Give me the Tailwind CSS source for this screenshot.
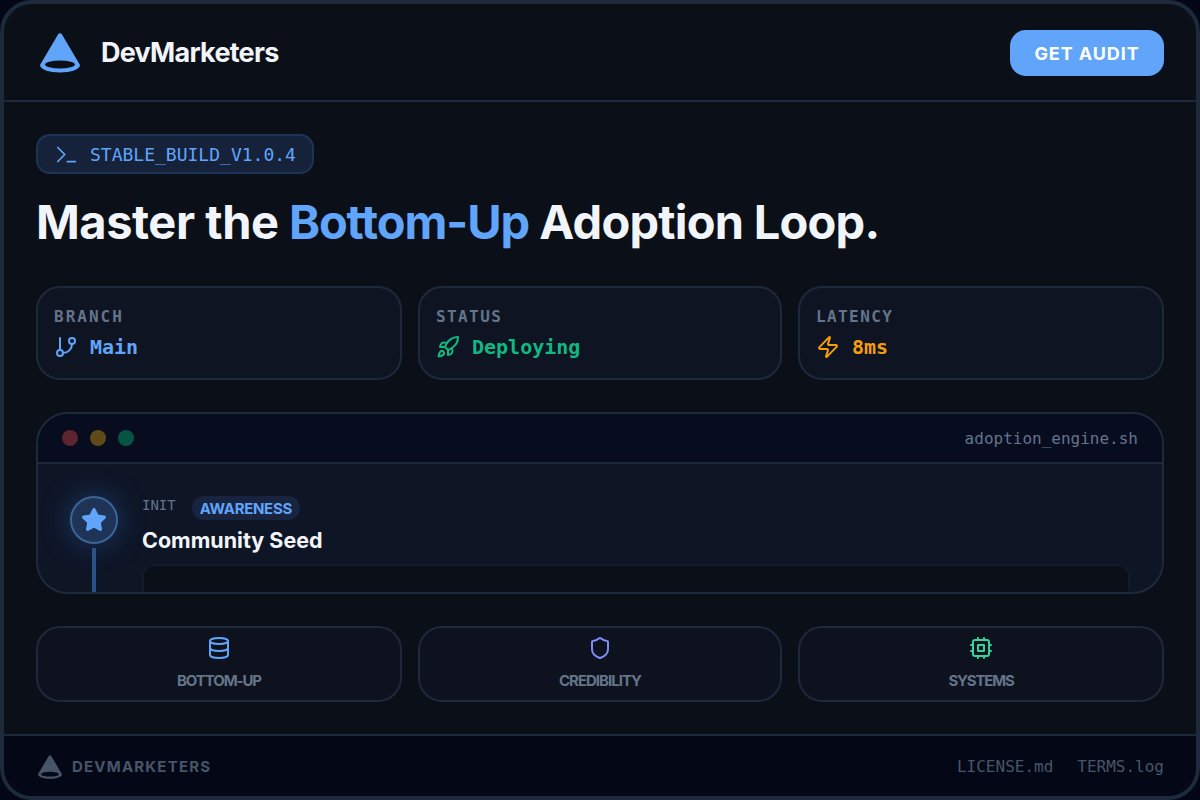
<!DOCTYPE html>
<html lang="en">
<head>
<meta charset="UTF-8" />
<title>DevMarketers</title>
<script src="https://cdn.jsdelivr.net/npm/@tailwindcss/browser@4"></script>
</head>
<body class="bg-[#020617] font-['Inter',sans-serif]">

<div class="w-[1200px] h-[800px] overflow-hidden rounded-[32px] border-4 border-[#1e293b] bg-[#0b0f18] flex flex-col">

  <!-- HEADER -->
  <header class="h-[98px] shrink-0 border-b-2 border-[#1e293b] px-8 flex items-center justify-between">
    <div class="flex items-center gap-[21px]">
      <svg width="40" height="40" viewBox="0 0 40 40" class="ml-1 mt-[1px]">
        <path d="M18 1.500c1-1.600 3-1.600 4 0L40 32c0 4.500-9 7.500-20 7.500S0 36.500 0 32z" fill="#60a5fa"/>
        <ellipse cx="20" cy="31.500" rx="15" ry="4" fill="#0b0f18"/>
      </svg>
      <span class="mt-[2px] text-[27px] font-bold tracking-[-0.75px] text-[#f1f5f9]">DevMarketers</span>
    </div>
    <button class="mt-[2px] h-[46px] w-[154px] rounded-2xl bg-[#60a5fa] text-white text-[18px] font-bold tracking-[0.9px]">GET AUDIT</button>
  </header>

  <!-- CONTENIDO -->
  <main class="flex-1 px-8 pt-8">
    <div class="inline-flex h-10 items-center gap-[13px] rounded-[14px] border-2 border-[#1e3a5f]/80 bg-[#16213a] pl-[18px] pr-[16px] font-['DejaVu_Sans_Mono',monospace] text-[18px] text-[#60a5fa]">
      <svg width="21" height="21" viewBox="0 0 24 24" fill="none" stroke="#60a5fa" stroke-width="2" stroke-linecap="round" stroke-linejoin="round"><path d="m2 4 8 8-8 8"/><path d="M13 20h9"/></svg>
      <span>STABLE_BUILD_V1.0.4</span>
    </div>

    <h1 class="mt-[18px] h-[60px] text-[47px] leading-[60px] font-bold tracking-[-0.77px] text-[#f1f5f9]"><span class="tracking-[-0.45px]">Master the</span> <span class="tracking-[-1.1px] text-[#60a5fa]">Bottom-Up</span> Adoption Loop.</h1>

    <!-- STATS -->
    <div class="mt-[34px] grid grid-cols-[366px_364px_366px] gap-4">
      <div class="h-[94px] rounded-[24px] border-2 border-[#1e293b] bg-[#0e1422] px-4 pt-[17px] font-['DejaVu_Sans_Mono',monospace]">
        <p class="text-[16px] leading-6 font-bold tracking-[2px] text-[#64748b]">BRANCH</p>
        <div class="mt-1 flex items-center gap-3 text-[20px] leading-7 font-bold text-[#60a5fa]">
          <svg width="24" height="24" viewBox="0 0 24 24" fill="none" stroke="#60a5fa" stroke-width="2" stroke-linecap="round" stroke-linejoin="round"><line x1="6" y1="3" x2="6" y2="15"/><circle cx="18" cy="6" r="3"/><circle cx="6" cy="18" r="3"/><path d="M18 9a9 9 0 0 1-9 9"/></svg>
          <span>Main</span>
        </div>
      </div>
      <div class="h-[94px] rounded-[24px] border-2 border-[#1e293b] bg-[#0e1422] px-4 pt-[17px] font-['DejaVu_Sans_Mono',monospace]">
        <p class="text-[16px] leading-6 font-bold tracking-[1.4px] text-[#64748b]">STATUS</p>
        <div class="mt-1 flex items-center gap-3 text-[20px] leading-7 font-bold text-[#10b981]">
          <svg width="24" height="24" viewBox="0 0 24 24" fill="none" stroke="#10b981" stroke-width="2" stroke-linecap="round" stroke-linejoin="round"><path d="M4.500 16.500c-1.500 1.260-2 5-2 5s3.740-.5 5-2c.71-.84.7-2.130-.09-2.910a2.180 2.180 0 0 0-2.910-.09z"/><path d="m12 15-3-3a22 22 0 0 1 2-3.950A12.880 12.880 0 0 1 22 2c0 2.720-.78 7.500-6 11a22.350 22.350 0 0 1-4 2z"/><path d="M9 12H4s.55-3.030 2-4c1.620-1.080 5 0 5 0"/><path d="M12 15v5s3.030-.55 4-2c1.080-1.620 0-5 0-5"/></svg>
          <span>Deploying</span>
        </div>
      </div>
      <div class="h-[94px] rounded-[24px] border-2 border-[#1e293b] bg-[#0e1422] px-4 pt-[17px] font-['DejaVu_Sans_Mono',monospace]">
        <p class="text-[16px] leading-6 font-bold tracking-[1.4px] text-[#64748b]">LATENCY</p>
        <div class="mt-1 flex items-center gap-3 text-[20px] leading-7 font-bold text-[#f59e0b]">
          <svg width="24" height="24" viewBox="0 0 24 24" fill="none" stroke="#f59e0b" stroke-width="2" stroke-linecap="round" stroke-linejoin="round"><path d="M4 14a1 1 0 0 1-.78-1.630l9.900-10.200a.5.5 0 0 1 .86.460l-1.920 6.020A1 1 0 0 0 13 10h7a1 1 0 0 1 .78 1.630l-9.900 10.200a.5.5 0 0 1-.86-.46l1.920-6.020A1 1 0 0 0 11 14z"/></svg>
          <span>8ms</span>
        </div>
      </div>
    </div>

    <!-- TERMINAL -->
    <div class="mt-8 h-[182px] overflow-hidden rounded-[32px] border-2 border-[#1e293b] bg-[#0e1525]">
      <div class="h-[50px] border-b-2 border-[#1e293b] bg-[#070c1e] pl-6 pr-6 flex items-center justify-between">
        <div class="flex gap-3">
          <span class="h-4 w-4 rounded-full bg-[#5e2430]"></span>
          <span class="h-4 w-4 rounded-full bg-[#5f4a1a]"></span>
          <span class="h-4 w-4 rounded-full bg-[#075444]"></span>
        </div>
        <span class="mt-[2px] font-['DejaVu_Sans_Mono',monospace] text-[16px] text-[#64748b]">adoption_engine.sh</span>
      </div>
      <div class="flex gap-6 pl-8 pr-[32px] pt-8">
        <div class="flex w-12 shrink-0 flex-col items-center">
          <div class="h-12 w-12 rounded-full border-2 border-[#3a6597] bg-[#1e3355] shadow-[0_0_30px_rgba(59,130,246,0.35)] flex items-center justify-center">
            <svg width="26" height="26" viewBox="0 0 24 24" fill="#60a5fa" stroke="#60a5fa" stroke-width="2" stroke-linecap="round" stroke-linejoin="round"><path d="M11.525 2.295a.53.53 0 0 1 .95 0l2.310 4.679a2.120 2.120 0 0 0 1.595 1.160l5.166.756a.53.53 0 0 1 .294.904l-3.736 3.638a2.120 2.120 0 0 0-.611 1.878l.882 5.140a.53.53 0 0 1-.771.560l-4.618-2.428a2.120 2.120 0 0 0-1.973 0L6.396 21.010a.53.53 0 0 1-.77-.56l.881-5.139a2.120 2.120 0 0 0-.611-1.879L2.160 9.795a.53.53 0 0 1 .294-.906l5.165-.755a2.120 2.120 0 0 0 1.597-1.160z"/></svg>
          </div>
          <div class="mt-1 h-12 w-1 bg-[#2b5288]"></div>
        </div>
        <div class="flex-1">
          <div class="flex items-start gap-4">
            <span class="font-['DejaVu_Sans_Mono',monospace] text-[14px] leading-[18px] text-[#64748b]">INIT</span>
            <span class="h-6 rounded-full bg-[#18243f] px-2 text-[15px] leading-[25px] font-bold tracking-[-0.3px] text-[#60a5fa]">AWARENESS</span>
          </div>
          <h2 class="mt-1 text-[21.500px] leading-8 font-bold text-[#f1f5f9]">Community Seed</h2>
          <div class="mt-2 h-20 rounded-xl border-2 border-[#111a2c] bg-[#0b0f18]"></div>
        </div>
      </div>
    </div>

    <!-- FEATURES -->
    <div class="mt-8 grid grid-cols-[366px_364px_366px] gap-4">
      <div class="h-[76px] rounded-[24px] border-2 border-[#1e293b] bg-[#0d121e] pt-2 flex flex-col items-center gap-2">
        <svg width="24" height="24" viewBox="0 0 24 24" fill="none" stroke="#60a5fa" stroke-width="2" stroke-linecap="round" stroke-linejoin="round"><ellipse cx="12" cy="5" rx="9" ry="3"/><path d="M3 5V19A9 3 0 0 0 21 19V5"/><path d="M3 12A9 3 0 0 0 21 12"/></svg>
        <span class="text-[15px] leading-[26px] font-bold tracking-[-1.1px] text-[#64748b]">BOTTOM-UP</span>
      </div>
      <div class="h-[76px] rounded-[24px] border-2 border-[#1e293b] bg-[#0d121e] pt-2 flex flex-col items-center gap-2">
        <svg width="24" height="24" viewBox="0 0 24 24" fill="none" stroke="#818cf8" stroke-width="2" stroke-linecap="round" stroke-linejoin="round"><path d="M20 13c0 5-3.500 7.500-7.660 8.950a1 1 0 0 1-.67-.01C7.500 20.500 4 18 4 13V6a1 1 0 0 1 1-1c2 0 4.500-1.200 6.240-2.720a1.170 1.170 0 0 1 1.520 0C14.510 3.810 17 5 19 5a1 1 0 0 1 1 1z"/></svg>
        <span class="text-[15px] leading-[26px] font-bold tracking-[-1px] text-[#64748b]">CREDIBILITY</span>
      </div>
      <div class="h-[76px] rounded-[24px] border-2 border-[#1e293b] bg-[#0d121e] pt-2 flex flex-col items-center gap-2">
        <svg width="24" height="24" viewBox="0 0 24 24" fill="none" stroke="#34d399" stroke-width="2" stroke-linecap="round" stroke-linejoin="round"><rect x="4" y="4" width="16" height="16" rx="2"/><rect x="9" y="9" width="6" height="6"/><path d="M15 2v2M15 20v2M2 15h2M2 9h2M20 15h2M20 9h2M9 2v2M9 20v2"/></svg>
        <span class="text-[15px] leading-[26px] font-bold tracking-[-1.2px] text-[#64748b]">SYSTEMS</span>
      </div>
    </div>
  </main>

  <!-- FOOTER -->
  <footer class="h-[62px] shrink-0 border-t-2 border-[#1e293b] bg-[#040816] px-8 flex items-center justify-between">
    <div class="flex items-center gap-[10px] pt-[2px]">
      <svg width="24" height="24" viewBox="0 0 40 40" class="ml-[2px]">
        <path d="M18 1.500c1-1.600 3-1.600 4 0L40 32c0 4.500-9 7.500-20 7.500S0 36.500 0 32z" fill="#475569"/>
        <ellipse cx="20" cy="32" rx="15" ry="4" fill="#040816"/>
      </svg>
      <span class="text-[15px] font-bold tracking-[1.2px] text-[#475569]">DEVMARKETERS</span>
    </div>
    <div class="flex gap-6 pt-[2px] font-['DejaVu_Sans_Mono',monospace] text-[16px] text-[#475569]">
      <span>LICENSE.md</span>
      <span>TERMS.log</span>
    </div>
  </footer>
</div>

</body>
</html>
